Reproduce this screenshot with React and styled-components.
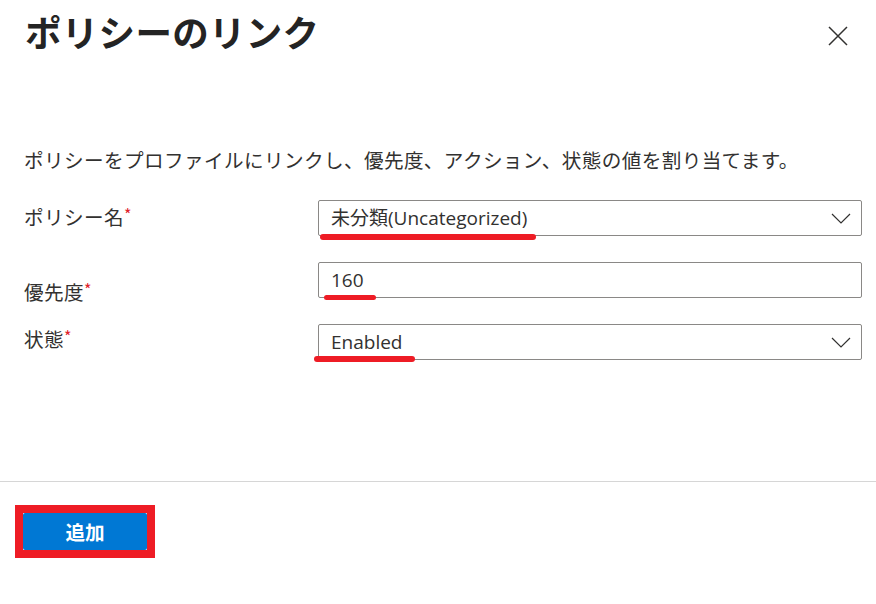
import React from 'react'
import styled, { createGlobalStyle } from 'styled-components'

const GlobalStyle = createGlobalStyle`
  html, body {
    margin: 0;
    padding: 0;
    background: #ffffff;
  }
  body {
    font-family: "Noto Sans", "Noto Sans CJK JP", sans-serif;
    color: #323130;
  }
`

const fields = [
    { label: 'ポリシー名', value: '未分類(Uncategorized)', select: true, labelTop: 3, mark: { left: 1, top: 33, width: 216, height: 6 } },
    { label: '優先度', value: '160', select: false, labelTop: 16, mark: { left: 5, top: 32, width: 52, height: 5 } },
    { label: '状態', value: 'Enabled', select: true, labelTop: 1, mark: { left: -5, top: 31, width: 101, height: 6 } },
]

const App = () => {
    return <Panel>
        <GlobalStyle />
        <Header>
            <Title>ポリシーのリンク</Title>
            <CloseButton aria-label='閉じる'>
                <svg width='20' height='20' viewBox='0 0 20 20'>
                    <path d='M1 1 L19 19 M19 1 L1 19' stroke='#323130' strokeWidth='1.5' fill='none' />
                </svg>
            </CloseButton>
        </Header>

        <Body>
            <Description>ポリシーをプロファイルにリンクし、優先度、アクション、状態の値を割り当てます。</Description>
            <Form>
                {fields.map((f) => (
                    <React.Fragment key={f.label}>
                        <Label $top={f.labelTop}>{f.label}<Required>*</Required></Label>
                        <Field>
                            <Value>{f.value}</Value>
                            {f.select && (
                                <svg width='20' height='11' viewBox='0 0 20 11'>
                                    <path d='M1 1 L10 10 L19 1' stroke='#323130' strokeWidth='1.2' fill='none' />
                                </svg>
                            )}
                            {/* red annotation strokes */}
                            <Mark style={{ left: f.mark.left, top: f.mark.top, width: f.mark.width, height: f.mark.height }} />
                        </Field>
                    </React.Fragment>
                ))}
            </Form>
        </Body>

        <Footer>
            <Highlight>
                <AddButton>追加</AddButton>
            </Highlight>
        </Footer>
    </Panel>
}

const Panel = styled.div`
  width: 876px;
  height: 604px;
  display: flex;
  flex-direction: column;
  background: #fff;
`

const Header = styled.header`
  display: flex;
  justify-content: space-between;
  align-items: flex-start;
  padding: 8px 28px 0 25px;
  height: 92px;
  box-sizing: border-box;
`

const Title = styled.h1`
  margin: 0;
  font-family: "Noto Sans CJK JP", sans-serif;
  font-size: 36.5px;
  font-weight: 700;
  line-height: 48px;
  letter-spacing: 0.3px;
  color: #242424;
`

const CloseButton = styled.button`
  border: none;
  background: none;
  padding: 0;
  margin-top: 18px;
  width: 20px;
  height: 20px;
  cursor: pointer;
  display: flex;
`

const Body = styled.main`
  flex: 1;
  padding: 54px 14px 0 24px;
`

const Description = styled.p`
  margin: 0;
  font-family: "Noto Sans CJK JP", sans-serif;
  font-size: 19.6px;
  line-height: 28px;
  letter-spacing: 0.4px;
`

const Form = styled.div`
  display: grid;
  grid-template-columns: 294px 1fr;
  grid-auto-rows: 36px;
  row-gap: 26px;
  margin-top: 26px;
`

const Label = styled.div`
  font-family: "Noto Sans CJK JP", sans-serif;
  font-size: 19.6px;
  line-height: 28px;
  letter-spacing: 0.4px;
  padding-top: ${(p) => p.$top}px;
`

const Required = styled.span`
  color: #e0202a;
  font-size: 16px;
  vertical-align: top;
  line-height: 22px;
`

const Field = styled.div`
  position: relative;
  height: 36px;
  box-sizing: border-box;
  border: 1px solid #8a8886;
  border-radius: 2px;
  display: flex;
  align-items: center;
  justify-content: space-between;
  padding: 0 10px 0 12px;
`

const Value = styled.span`
  font-family: "Open Sans", "Noto Sans CJK JP", sans-serif;
  font-size: 19px;
  font-weight: 400;
  line-height: 26px;
  color: #323130;
`

const Mark = styled.span`
  position: absolute;
  background: #ee1c25;
  border-radius: 3px;
`

const Footer = styled.footer`
  height: 123px;
  box-sizing: border-box;
  border-top: 1px solid #d6d6d6;
  padding: 23px 15px 0;
`

const Highlight = styled.div`
  display: inline-flex;
  border: 8px solid #ee1c25;
  background: #fff;
`

const AddButton = styled.button`
  width: 124px;
  height: 37px;
  border: none;
  border-radius: 2px;
  background: #0078d4;
  color: #fff;
  font-family: "Noto Sans CJK JP", sans-serif;
  font-size: 19.6px;
  font-weight: 700;
  cursor: pointer;
`

export default App
